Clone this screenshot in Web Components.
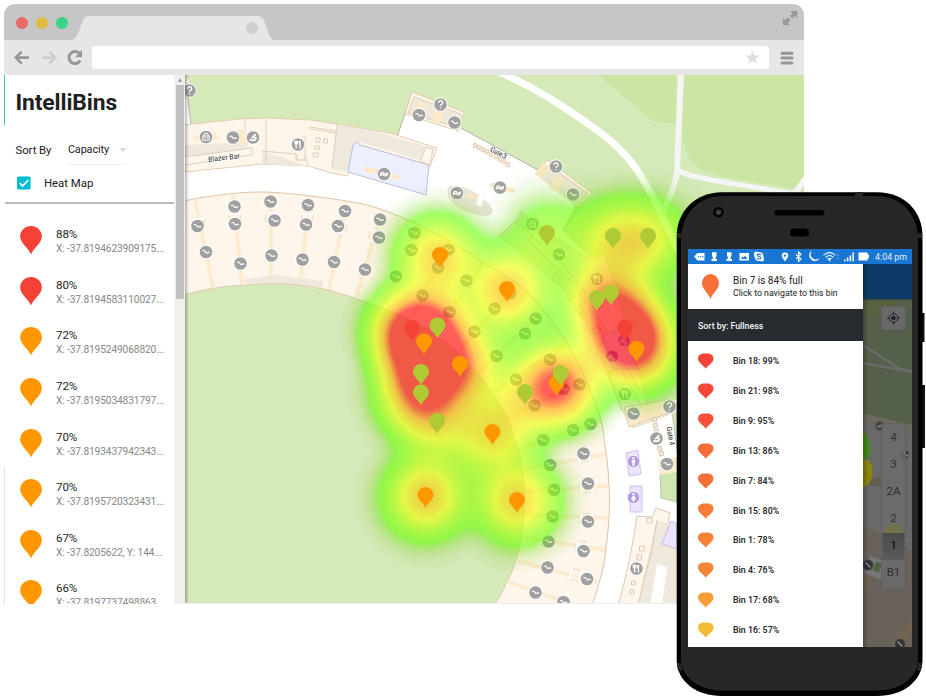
<!DOCTYPE html>
<html lang="en">
<head>
<meta charset="utf-8">
<title>IntelliBins</title>
<style>
html,body{margin:0;background:#fff;font-family:Roboto,"Liberation Sans",sans-serif;color:#212121}
body{width:926px;height:696px;overflow:hidden}
</style>
</head>
<body>
<showcase-stage>
  <browser-window>
    <bin-sidebar slot="side"></bin-sidebar>
    <stadium-map slot="main"></stadium-map>
  </browser-window>
  <phone-frame slot="overlay"><phone-app></phone-app></phone-frame>
</showcase-stage>
<script>
const define = (name, html, after) => customElements.define(name, class extends HTMLElement {
  connectedCallback() {
    if (this.shadowRoot) return;
    const root = this.attachShadow({mode: 'open'});
    root.innerHTML = typeof html === 'function' ? html(this) : html;
    if (after) after(root, this);
  }
});
const PIN = 'M0 0C-1.6-4.4-8-8.4-8-13.2A8 7.8 0 1 1 8-13.2C8-8.4 1.6-4.4 0 0Z';

/* Smooth curve through a flat list of coordinates */
const curve = (p, start = 'M') => {
  const n = p.length / 2, at = i => { i = Math.max(0, Math.min(n - 1, i)); return [p[2*i], p[2*i+1]]; };
  let d = start + p[0] + ' ' + p[1];
  for (let i = 0; i < n - 1; i++) {
    const a = at(i-1), b = at(i), c = at(i+1), e = at(i+2);
    d += `C${b[0]+(c[0]-a[0])/6} ${b[1]+(c[1]-a[1])/6} ${c[0]-(e[0]-b[0])/6} ${c[1]-(e[1]-b[1])/6} ${c[0]} ${c[1]}`;
  }
  return d;
};

define('showcase-stage', `<style>
:host{display:block;position:relative;width:926px;height:696px;overflow:hidden;box-sizing:border-box;padding:4px}
.over{position:absolute;left:676px;top:192px}
</style><slot></slot><div class="over"><slot name="overlay"></slot></div>`);

define('browser-window', `<style>
:host{display:grid;grid-template-rows:36px 35px 529px;width:800px;height:600px;border-radius:11px 11px 0 0;overflow:hidden;background:#fff}
.title{background:#c6c6c6;display:flex}
.bar{background:#e6e6e6;display:flex;align-items:center;padding:0 10.5px 0 9px}
.url{flex:1;height:23px;background:#fff;border-radius:3px;margin:0 11px 0 9px;display:flex;align-items:center;justify-content:flex-end;padding-right:9px}
.body{display:grid;grid-template-columns:181px 619px;min-height:0}
svg{display:block}
</style>
<div class="title"><svg width="800" height="36" viewBox="4 4 800 36">
<path d="M70 40C76 40 77 36 82 23C84 17 85 16 90 16H256C262 16 263 18 265 23L269 34C271 39 272 40 276 40Z" fill="#e6e6e6"/>
<circle cx="22" cy="23" r="6.1" fill="#e96b68"/><circle cx="42" cy="23" r="6.1" fill="#e0bb44"/><circle cx="62" cy="23" r="6.1" fill="#3ad38a"/>
<circle cx="252" cy="28" r="6.1" fill="#cfcfcf"/>
<path d="M790.3 11H797.3V18L795 15.8L792.4 18.5L789.8 15.8L792.5 13.2ZM783 18V25H790L787.6 22.7L790.4 20L787.6 17.5L785.2 20.3Z" fill="#989898"/>
</svg></div>
<div class="bar">
<svg width="70" height="24" viewBox="13 46 70 24" fill="none" stroke="#979797" stroke-width="2.6" stroke-linecap="round">
<path d="M28 57.6H16M21 52.3L15.7 57.6L21 62.9"/><path d="M43 57.6H55M50 52.3L55.3 57.6L50 62.9" stroke="#cdcdcd"/>
<path d="M80 54.2A6 6 0 1 0 80.2 60.6" stroke-width="3" stroke-linecap="butt"/><path d="M82 50V57.3H75Z" fill="#979797" stroke="none"/></svg>
<div class="url"><svg width="15" height="15" viewBox="0 0 24 24"><path d="M12 .8L14.9 8.9H23.6L16.7 14L19.2 22.4L12 17.3L4.8 22.4L7.3 14L.4 8.9H9.1Z" fill="#dedede"/></svg></div>
<svg width="14" height="14" viewBox="0 0 14 14" stroke="#969696" stroke-width="3" stroke-linecap="round"><path d="M2 2.2H12M2 7.1H12M2 12.1H12"/></svg>
</div>
<div class="body"><slot name="side"></slot><slot name="main"></slot></div>`);

define('bin-row', el => `<style>
:host{display:flex;height:50.65px;align-items:flex-start}
svg{flex:none;margin:0 14.5px 0 0;overflow:visible}
b,span{display:block;font-weight:400;white-space:nowrap}
b{font-size:11.6px;line-height:15px;color:#252525;margin-top:1px;letter-spacing:-.1px}
span{font-size:10.2px;line-height:14px;color:#888;letter-spacing:-.13px}
</style><svg width="22" height="28.500" viewBox="-8 -21 16 21"><path d="${PIN}" fill="${el.getAttribute('color')}"/></svg>
<div><b>${el.getAttribute('fill')}%</b><span>${el.getAttribute('pos')}</span></div>`);

const rows = [[88,'X: -37.8194623909175...'],[80,'X: -37.8194583110027...'],[72,'X: -37.8195249068820...'],[72,'X: -37.8195034831797...'],[70,'X: -37.8193437942343...'],[70,'X: -37.8195720323431...'],[67,'X: -37.8205622, Y: 144...'],[66,'X: -37.8197737498863...']];
define('bin-sidebar', `<style>
:host{display:grid;grid-template-columns:170.4px 10.6px;height:529px;overflow:hidden;box-sizing:border-box;
background:linear-gradient(#3ecf8e,#3ecf8e) 0 0/1px 50px no-repeat,linear-gradient(#e3e3e3,#e3e3e3) 0 391px/1px 138px no-repeat #fff}
.panel{overflow:hidden;padding-left:1px}
h1{font-size:22.8px;line-height:28px;font-weight:700;margin:14px 0 0 10.5px;letter-spacing:-.1px;color:#212121}
.sort{display:flex;margin:18px 0 0 10.5px;font-size:11.4px;letter-spacing:-.08px;line-height:30px;height:30px}
.sel{margin-left:16.500px;width:58px;height:30px;border-bottom:1px solid #eee;display:flex;align-items:center;justify-content:space-between;box-sizing:border-box;font-size:10.800px}
.sel i{border:4px solid transparent;border-top-color:#dcdcdc;border-bottom:0;margin-right:-1px}
.heat{display:flex;align-items:center;margin:11px 0 0 12.400px;height:14px;font-size:11.400px}
.heat svg{margin-right:12.500px}
hr{margin:12px 0 0;border:0;border-top:2px solid #bcbcbc}
.list{padding:22px 0 0 14.500px}
.scroll{background:#f0f0f0;display:flex;flex-direction:column;align-items:center}
.scroll i{border:2.500px solid transparent;border-bottom:4px solid #999;border-top:0;margin:3px 0 3px}
.scroll div{width:8px;height:214px;background:#c1c1c1}
</style><div class="panel"><h1>IntelliBins</h1>
<div class="sort">Sort By<div class="sel">Capacity<i></i></div></div>
<div class="heat"><svg width="14" height="14"><rect width="13.500" height="13" y=".5" rx="1.500" fill="#00bcd4"/><path d="M2.600 7L5.600 10L11.300 4" fill="none" stroke="#fff" stroke-width="1.700"/></svg>Heat Map</div><hr>
<div class="list">${rows.map(r => `<bin-row fill="${r[0]}" pos="${r[1]}" color="${r[0] > 75 ? '#f44336' : '#ff9800'}"></bin-row>`).join('')}</div></div>
<div class="scroll"><i></i><div></div></div>`);

/* ---- Stadium map ---- */
const outer = [178,203,205,197,265,192,340,200,383,210,435,233,483,262,527,292,563,337,583,373,600,417,605,445,608,470,609.5,505,607,540,602,572,592,606];
const inner = [492,609,503,590,515,563,522,533,524,500,523,475,518,450,503,410,477,373,445,342,407,318,360,300,323,289,285,284,247,285,215,288,178,296];
const aisles = [[195,200,213,288],[233,195,242,284],[271,193,271,276],[309,196,301,278],[347,201,329,290],[382,211,356,297],[418,225,385,302],[450,240,413,316],[483,262,432,340],[510,292,460,350],[535,318,478,373],[565,345,493,393],[580,383,507,418],[600,420,518,450],[605,454,522,470],[608,486,524,492],[608,518,524,515],[606,550,522,537],[597,582,517,561],[580,607,508,582]];
const stairs = [419,115,454.5,122.5,573,194.5,233,137.5,234.5,206.5,270.5,201.5,308,205,345,211,380,219.5,197.5,226,235,224,274.5,220.5,306,224.5,338,226,379,237.5,206,252,240.5,263.5,271.5,255.5,302.5,259.5,334,262,365,269.5,414.5,233,411.5,250,396,276.5,422.5,295.5,559,254.5,448.5,249.5,438,267.5,466.5,280.5,494.5,308.5,535.5,318.5,525,333.5,474.5,331.5,449.5,312,496.5,356,550,359.5,516,379.5,579.5,384.5,563.5,389,534.5,405.5,633.5,413.5,573,430,590.5,424,510,293,543,440,550,465,583.5,453.5,588,483.5,554,489.7,588,521.5,552.5,516.5,548.5,541.5,583.5,551,547.5,567.5,587,579,535.5,592.5,563.5,602,667,464];
const glyph = {
  q: '<path d="M-2-1.6C-2-4.6 2.2-4.4 2.2-1.8C2.2-.2 0-.2 0 1.6M0 2.8V4"/>',
  f: '<path d="M-1.9-3.8V4M2-3.8V4M-3.1-3.8V-.8H-.7V-3.8M1.4-3.4V0"/>',
  b: '<path d="M-3.2-1H3.2V3.2H-3.2ZM-2.4-1L-1.6-3.6H1.6L2.4-1M-1.2 .2V1.8M1.2 .2V1.8" stroke-width="1"/>',
  w: '<path d="M-4 .2C-3-2-1-2 0-.6S3-.2 4-1.4M-4 2C-3 0-1 .2 0 1.4S3 1.4 4 .2"/>',
  h: '<path d="M2.6-3.4L.4-.8L-1.4 .4M3.4 .2L1.6 2.6H-3.4M1-.6L3.2 .2" stroke-width="1.8"/>',
  d: '<path d="M-2-2.5V1.5H1.5L2.6 3.6M-2-.6H1M-3 .5A3 3 0 1 0 1.5 3"/>'
};
const poi = [['q',189.5,90.5],['q',440.5,104.5],['q',556,166.5],['q',669.5,406.5],['b',206,137],['b',532.5,224],['f',298,144.5],['f',597,279],['f',625,394],['f',636.5,568.5],['w',384,174],['w',457,193],['w',500,187.5],['h',253,137.5],['h',656.5,438.5]];
const heat = [[426,497,.62],[517,501,.58],[492,434,.5],[437,424,.3],[421,396,.6],[421,376,.5],[460,368,.72],[424,346,.65],[412,331,1],[437,328,.4],[438,258,.58],[507,291,.62],[525,400,.25],[558,385,1.02],[547,237,.2],[613,240,.38],[648,240,.38],[597,300,.32],[611,295,.34],[625,328,1],[636,350,.8]];
const pins = [['g',547,246],['g',613,249],['g',648,249],['g',597,311],['g',611,305.5],['g',421,385],['g',421,405.5],['g',437,434],['g',525,405],['r',412,341],['g',437.5,338.5],['r',625,340.5],['o',440,268],['o',507,302],['o',424,354.5],['o',460,377],['o',492.500,445],['o',425.5,508],['o',517,513],['o',636.500,362],['o',556.5,396],['g',560.5,386]];
const col = {g:'#afca33', o:'#ff9800', r:'#f44336'};
const tbl = (a) => a.map(v => (v / 255).toFixed(3)).join(' ');

define('stadium-map', () => `<style>:host{display:block;width:619px;height:529px;overflow:hidden}svg{display:block}</style>
<svg width="619" height="529" viewBox="185 75 619 529">
<defs>
<radialGradient id="k">${[0,.1,.2,.3,.4,.5,.6,.7,.8,.9,1].map(t => `<stop offset="${t}" stop-color="#fff" stop-opacity="${Math.max(0, (Math.exp(-t*t*4.6) - .01) / .99).toFixed(4)}"/>`).join('')}</radialGradient>
<linearGradient id="edge"><stop stop-color="#000" stop-opacity=".28"/><stop offset="1" stop-color="#000" stop-opacity="0"/></linearGradient>
<filter id="ramp" x="0" y="0" width="1" height="1" color-interpolation-filters="sRGB">
<feComponentTransfer in="SourceGraphic" result="c">
<feFuncR type="table" tableValues="${tbl([105,102,147,193,238,244,249,255,255,255,255])}"/>
<feFuncG type="table" tableValues="${tbl([190,255,255,255,255,227,198,170,113,57,0])}"/>
<feFuncB type="table" tableValues="0 0"/></feComponentTransfer>
<feColorMatrix in="SourceGraphic" values="0 0 0 0 1 0 0 0 0 1 0 0 0 0 1 1 0 0 0 0" result="m"/>
<feComponentTransfer in="m" result="m2"><feFuncA type="table" tableValues="0 .61 .62 .62 .62 .62 .62 .62 .62 .62 .62"/></feComponentTransfer>
<feComposite in="c" in2="m2" operator="in"/></filter>
<g id="st"><circle r="7.2" fill="#fff"/><circle r="6.3" fill="#a0a0a0"/><path d="M-3.700-.9C-2.400-2-1.600-1.500-.8-.3S1 1.400 1.800 .6S3 .4 3.700 1.200" stroke="#fff" stroke-width="1.200" fill="none"/></g>
</defs>
<rect x="185" y="75" width="619" height="529" fill="#d5e9b9"/>
<g fill="#cbe6a2" stroke="#d9ecbf" stroke-width="1"><path d="M596 74L653 122L677 124.500V74Z"/><path d="M682 74H805V191L724 178L705 173L690 163L684 147L681 130Z"/></g>
<!-- park paths -->
<g fill="none" stroke-linejoin="round"><path d="${curve([495,70,530,87,565,108,607,138,632,163,650,192,665,222,683,260])}" stroke="#fff" stroke-width="7"/>
<path d="M681 74L677 172C675 188 668 200 662 215" stroke="#f5f5f5" stroke-width="6"/><path d="M677 170C690 178 720 181 806 196" stroke="#f5f5f5" stroke-width="5"/><path d="M790 200L806 178" stroke="#f5f5f5" stroke-width="6"/></g>
<!-- concourse -->
<path d="M180 150L191 125L186 80L180 75V300H500L560 606H677V400L645 403L605 255L593 259L563 230L580 195L538 170L461 128L412 92L397 137L340 140L185 150Z" fill="#fff"/>
<path d="${curve(inner)}L180 610Z" fill="#d5e9b9"/>
<path d="M605 255L593 259L563 230L580 205L610 225Z" fill="#d5e9b9"/>
<path d="M660 474L677 466V502L661 498Z" fill="#cfe6b2" stroke="#a5b98b" stroke-width=".7"/><path d="M672 413L677 402V450Z" fill="#cfe6b2" stroke="#b5b1a8" stroke-width=".7"/>
<path d="M563 230L580 205M461 128L538 170M191 125L187 90M397 137L412 93" stroke="#b5b1a8" stroke-width="1" fill="none"/>
<!-- north stand -->
<g stroke="#e4cdb6" stroke-width="1" fill="#fef6ea">
<path d="M184 125L240 119L266 118L310 120L337 124L390 133L437 148L430 166L384 152L360 145L347 176L332 173L308 166L262 164L185 172Z"/>
<path d="M184 145L248 142L247 155L185 163Z M262 151L298 154L307 156V166L262 164Z M337 125L370 130L425 146L427 162L360 142L351 172L332 169Z" fill="#efe8dc" stroke="none"/>
<path d="M266 118V164M245 120V142M184 157L252 148V155L185 165M337 125L332 168M310 127L336 131V133L310 129ZM302 137H305V160H297V155M262 151L296 154V160H307V166"/>
<path d="M316 138h4v4h-4zM323.500 139h4v4h-4zM314.500 146h5v3h-5zM313 153h5v4h-5z"/>
<path d="M193 136L216 132L218 139L196 142ZM228 130L246 129L246 143L228 143Z" fill="#fdebd0" stroke="none"/>
<path d="M353 145L357 142L360 145L429 165L426 195L348 172Z" fill="#ebeffe" stroke="#bcbfe0"/><path d="M426 147L433 149L430 165L420 161Z"/>
<path d="M365 166L400 176L399 180L364 171Z" fill="#fde8c8" stroke="none"/>
<path d="M185 76L190 80L191 95L185 98Z"/>
<path d="M412 92L464 112L458 131L405 114Z"/><path d="M414 97L461 114L457 127L408 113Z" fill="#efe8dc"/><path d="M437 107L444 109L439 124L431 121ZM418 102L427 105L421 113L413 110Z" fill="#fde8c8" stroke="none"/>
<path d="M547 160L592 193L578 207L536 174Z"/><path d="M549 165L588 194L578 204L541 175Z" fill="#efe8dc"/><path d="M543 163L550 166L543 180L535 174ZM557 175L565 179L557 192L550 188Z" fill="#fde8c8" stroke="none"/>
<path d="M448 187C457 182 480 191 492 208C496 222 469 215 455 205C449 200 446 192 448 187Z" fill="#ebe4dc" stroke="none"/><path d="M491 182L515 189L514 193L489 187Z M466 193L478 196V199L465 197Z" fill="#fde8c8" stroke="none"/><path d="M479 195L484 197L481 207L476 205Z" fill="#fff" stroke="none"/>
<path d="M474 143l3 1-1 4-3-1zM478 145l3 1-1 4-3-1zM482 147l3 1-1 4-3-1zM486 149l3 1-1 4-3-1zM490 152l3 1-1 4-3-1zM495 154l3 1-1 4-3-1zM499 157l3 1-1 4-3-1zM503 159l3 1-1 4-3-1zM507 162l3 1-1 4-3-1z" fill="#f5e7d6"/>
</g>
<!-- seating ring -->
<path d="${curve(outer)}${curve(inner, 'L')}Z" fill="#fef6ea"/>
<g stroke="#fdebd0" stroke-width="4">${aisles.map(a => `<path d="M${a[0]} ${a[1]}L${a[2]} ${a[3]}"/>`).join('')}</g>
<g fill="#fef3e0" stroke="#e6d8c6" stroke-width=".8">${[[199,223,-8],[235,218,-4],[271,217,0],[307,218,3],[341,226,12],[375,235,15],[411,248,22],[467,282,40],[524,331,52],[551,358,60],[585,456,80],[588,487,88],[588,519,92],[584,547,96],[577,575,105]].map(a => `<g transform="translate(${a[0]} ${a[1]}) rotate(${a[2]})"><path d="M-5.500-5.500H5.500V8H-5.500Z"/><path d="M-5-3V-4.500H5V-3M-5 5.500V7H5V5.500" fill="none" stroke="#fff" stroke-width="2"/></g>`).join('')}</g>
<path d="M244 279L275 275L323 281V289Q285 282 247 285Z" fill="#efe8dc"/>
<path d="${curve(outer)}" fill="none" stroke="#dfc3a8" stroke-width="1"/><path d="${curve(inner)}" fill="none" stroke="#e0c9b0" stroke-width="1"/>
<!-- east stand -->
<g stroke="#dbc9b0" stroke-width="1" fill="#fef6ea">
<path d="M593 259L605 255L647 403L673 399L676 412L633 428L622 410L604 366Q590 320 562 288L499 236L515 222Z" fill="#f7efe2" stroke="#e8dccb"/>
<path d="M514 221L520 210L585 258L593 259" fill="#efe8dc" stroke="none"/><path d="M499 236L515 222L532 234L529 241L550 262L560 271L575 285L595 318L612 350L640 405M532 236L562 264L580 285L600 320L615 350L648 403M608 372L630 365M608 372L622 410M563 230L593 259M552 279l5-6 4 4-5 6zM566 297l5-5 4 4-5 5zM575 309l5-4 4 5-5 4zM592 330l5-4 4 5-5 4z" fill="none"/>
<path d="M602 335L622 328L638 370L612 368Z" fill="#e7ddf9" stroke="#c9b9ee"/>
<path d="M624 407L671 399L674 411L629 427Z" fill="#fde8c8"/>
<path d="M652 418l4-1 1 4-4 1zM653 424l4-1 1 4-4 1zM654 430l4-1 1 4-4 1zM657 447l4-1 1 4-4 1zM659 452l4-1 1 4-4 1z" fill="#f5e7d6"/><path d="M658 460L677 457V472L660 475Z" fill="#fde8c8" stroke="none"/>
<path d="M626 453L638 450L641 474L629 476ZM630 486H642V512H630Z" fill="#ede3fc" stroke="#cfc3ee"/>
<path d="M637 516L652 517L656 508L670 513L668 522L677 526V606H618Q631 560 637 516Z"/><path d="M657 521L669 523L677 532V606H639Q644 570 657 521Z" fill="#efe8dc" stroke="none"/><path d="M657 520L652 550L644 580L638 606" fill="none"/><path d="M657 564L667 567L662 606H650Z" fill="#fff" stroke="none"/><path d="M671 521L677 524V549L662 544Z" fill="#ede3fc" stroke="#c9bcef"/>
<path d="M647 518h5v5h-5zM639.500 546h5v5h-5zM637 555h4.500v5h-4.500zM631.500 581h4v4h-4zM630 590h4v4h-4z"/></g>
<!-- facility icons -->
${Array.from({length: stairs.length/2}, (_, i) => `<use href="#st" x="${stairs[2*i]}" y="${stairs[2*i+1]}"/>`).join('')}
${poi.map(p => `<g transform="translate(${p[1]} ${p[2]})"><circle r="7.2" fill="#fff"/><circle r="6.3" fill="#a0a0a0"/><g stroke="#fff" stroke-width="1.3" fill="none">${glyph[p[0]]}</g></g>`).join('')}
${[[624,340.5],[612,356.5]].map(p => `<g transform="translate(${p})"><circle r="6" fill="#9c6fd0"/><g stroke="#fff" fill="none">${glyph.d}</g></g>`).join('')}
${[[633.5,461.5],[633.5,497.5]].map((p,i) => `<g transform="translate(${p})"><circle r="6.200" fill="#b29be3" stroke="#fff" stroke-width=".8"/><circle cy="-3.200" r="1.200" fill="#fff"/><path d="${i ? 'M-1-1.500H1L2.500 2H.8V4.500H-.8V2H-2.500Z' : 'M-1.700-1.500H1.700V1.500H1V4.500H-1V1.500H-1.700Z'}" fill="#fff"/></g>`).join('')}
<g font-family="Roboto,sans-serif" font-size="7.200" fill="#222" stroke="#fff" stroke-width="1.500" paint-order="stroke" letter-spacing=".1"><text transform="translate(208.500 162) rotate(-7)" textLength="32">Blazer Bar</text><text transform="translate(489.500 151) rotate(27)" textLength="18">Gate 3</text><text transform="translate(666.500 427) rotate(80)" textLength="19">Gate 4</text></g>
<g filter="url(#ramp)"><rect x="185" y="75" width="619" height="529" fill="#000"/>${heat.map(h => `<circle cx="${h[0]}" cy="${h[1]}" r="73" fill="url(#k)" opacity="${Math.min(1, h[2])}" style="mix-blend-mode:plus-lighter"/>`).join('')}</g>
${pins.map(p => `<path transform="translate(${p[1]} ${p[2]})" d="${PIN}" fill="${col[p[0]]}"/>`).join('')}
<rect x="185" y="75" width="4" height="529" fill="url(#edge)"/><path d="M185 603.500H804" stroke="#eee"/>
</svg>`);

/* ---- Phone ---- */
define('phone-frame', `<style>
:host{display:block;position:relative;width:250px;height:504px}
svg{position:absolute;inset:0}
.screen{position:absolute;left:12px;top:57px;width:224px;height:398px;overflow:hidden}
</style><svg width="250" height="504" viewBox="676 192 250 504">
<path d="M920 313H924.500V342H920ZM920 385H925V448H920Z" fill="#111"/>
<path d="M722 192.300H877C905 192.300 922.500 212 922.500 236V660C922.500 681 903 696 877 696H722C696 696 676.700 681 676.700 660V236C676.700 212 695 192.300 722 192.300Z" fill="#000"/>
<path d="M722 196H877C901 196 918 214 918 240V660C918 676 902 690.500 877 690.500H722C698 690.500 681 676 681 660V240C681 214 699 196 722 196Z" fill="#272727"/>
<path d="M855 192H863V196H855ZM677 233H681V238H677ZM918 233H922V238H918ZM677 663H681.500L682 671H678ZM918 663H922L921 671H917Z" fill="#272727"/>
<rect x="774.500" y="210" width="50" height="5.500" rx="2.700" fill="#000"/><rect x="790" y="228.500" width="19" height="8" rx="4" fill="#000"/>
<circle cx="718.500" cy="212.300" r="5.200" fill="#000"/><circle cx="718.500" cy="212.300" r="3" fill="#333"/><circle cx="718.500" cy="212.300" r="1.200" fill="#555"/></svg>
<div class="screen"><slot></slot></div>`);

define('status-bar', `<style>:host{display:flex;height:15px;background:#1976d2;color:#e8f1fb;align-items:center}svg{display:block}
span{font-size:8.900px;margin-left:2px;white-space:nowrap}</style>
<svg width="185" height="15" viewBox="688 249 185 15" fill="#fff">
<path d="M694 256.500L697.500 253H704.500V260.500H697.500Z"/><g fill="#1976d2"><circle cx="698.500" cy="256.800" r=".7"/><circle cx="700.700" cy="256.800" r=".7"/><circle cx="702.900" cy="256.800" r=".7"/></g>
<path d="M712 252.300H716.500V256L715.700 257V259H717V261H711.500V259H712.800V257L712 256ZM727 252.300H731.500V256L730.700 257V259H732V261H726.500V259H727.800V257L727 256Z"/>
<path d="M739.500 253H749V260.500H739.500ZM741 259H747.500L745 255.800L743.500 257.500L742.500 256.500Z" fill-rule="evenodd"/>
<circle cx="759" cy="256.500" r="4.500"/><circle cx="756.300" cy="254" r="2.400"/><circle cx="761.700" cy="259" r="2.400"/><path d="M760.900 255C760.300 253.700 757.300 253.800 757.300 255.300C757.300 256.900 760.900 256.100 760.900 257.900C760.900 259.400 757.500 259.400 757 257.900" fill="none" stroke="#1976d2" stroke-width="1.100"/>
<path transform="translate(785 261.500) scale(.41)" d="M0 0C-1.600-4.400-8-8.400-8-14A8 8 0 1 1 8-14C8-8.400 1.600-4.400 0 0Z"/><circle cx="785" cy="255.600" r="1.200" fill="#1976d2"/>
<path d="M796 254.500L801 259L798.500 261.500V252L801 254.300L796 259" fill="none" stroke="#fff" stroke-width="1.100"/>
<path d="M811 251.500A5.300 5.300 0 1 0 818.800 259A5.600 5.600 0 0 1 811 251.500Z" stroke="#fff" stroke-width=".6"/>
<g fill="none" stroke="#fff" stroke-width="1.100"><path d="M823.500 255.300Q829.500 250 835.500 255.300M825.500 257.300Q829.500 253.800 833.500 257.300M827.500 259.200Q829.500 257.500 831.500 259.200"/></g><circle cx="829.500" cy="260.300" r="1"/><path d="M837.500 254.500h1v1.200h-1zM837.500 258h1v1.200h-1z" opacity=".6"/>
<path d="M844 259.500h1.600v1.800h-1.600zM846.800 257.500h1.600v3.800h-1.600zM849.600 255.500h1.600v5.800h-1.600zM852.400 252.500h1.600v8.800h-1.600z"/>
<path d="M858.500 252.500H867.500V254.500H869V258.500H867.500V260.500H858.500Z"/></svg><span>4:04 pm</span>`);

define('phone-row', el => `<style>:host{display:flex;align-items:center;height:29.850px;padding-left:10px;font-size:8.800px;font-weight:600;color:#2b2b2b;white-space:nowrap}
svg{margin-right:19.500px;display:block}</style>
<svg width="15.500" height="16" viewBox="0 0 16 16"><path d="M8 16C6 12.500 0 10 0 5.700C0 1 4-.1 8 .3C12-.1 16 1 16 5.700C16 10 10 12.500 8 16Z" fill="${el.getAttribute('color')}"/></svg><slot></slot>`);

const list = [['18: 99','#f44336'],['21: 98','#f44737'],['9: 95','#f55138'],['13: 86','#f66c38'],['7: 84','#f67037'],['15: 80','#f57c37'],['1: 78','#f58236'],['4: 76','#f58635'],['17: 68','#f59e35'],['16: 57','#f4bc36']];
define('phone-app', `<style>
:host{display:grid;grid-template-rows:15px 383px;width:224px;height:398px}
.main{display:grid;grid-template-columns:174.500px 49.500px;overflow:hidden}
.drawer{background:#fff;overflow:hidden}
.next{height:45px;display:flex;align-items:center;font-size:10px;line-height:12.500px;white-space:nowrap}
.next div{padding-top:1px}
.next svg{margin:0 14px 0 14px}.next small{display:block;font-size:8.750px}
.sort{height:32px;background:#272c30;color:#f5f5f5;font-size:8.800px;font-weight:500;display:flex;align-items:center;padding:1px 0 0 10px;box-sizing:border-box}
.list{padding-top:5.500px}
.side{background:#68625a}
.side svg{display:block}
</style><status-bar></status-bar><div class="main"><div class="drawer">
<div class="next"><svg width="17" height="25" viewBox="-8 -21 16 21" preserveAspectRatio="none"><path d="${PIN}" fill="#f67037"/></svg><div>Bin 7 is 84% full<small>Click to navigate to this bin</small></div></div>
<div class="sort">Sort by: Fullness</div>
<div class="list">${list.map(r => `<phone-row color="${r[1]}">Bin ${r[0]}%</phone-row>`).join('')}</div></div>
<div class="side"><svg width="49.500" height="383" viewBox="862.500 264 49.500 383">
<defs><linearGradient id="s"><stop stop-color="#000" stop-opacity=".28"/><stop offset="1" stop-color="#000" stop-opacity="0"/></linearGradient><linearGradient id="one" x2="0" y2="1"><stop stop-color="#4b4b4b"/><stop offset="1" stop-color="#5a5a5a"/></linearGradient></defs>
<path d="M862 420L912 430V550L862 525Z" fill="#696969"/>
<path d="M862 264H912V425L862 414Z" fill="#55604a"/><path d="M862 299H900L885 316H862Z" fill="#55633f"/>
<path d="M862 345L900 369L912 371M862 363L912 372" stroke="#6a6a6a" stroke-width="2.500" fill="none"/>
<path d="M862 414L912 426V436L862 423Z" fill="#6c6862"/><path d="M862 420L912 435" stroke="#716354" stroke-width="2" stroke-dasharray="3 2"/>
<path d="M862 523L912 542M862 414L912 426" stroke="#7b7166" stroke-width=".8"/>
<path d="M866 482Q876 474 882 480L880 487L866 485Z" fill="#625f52"/>
<path d="M870 556L885 562L880 580L864 573Z" fill="#777"/><path d="M876 561L882 564L878 573L872 570Z" fill="#526344"/><path d="M890 643L912 620V634L900 647Z" fill="#756450"/><path d="M862 573L873 579L862 600Z" fill="#706353"/>
<circle cx="860" cy="436" r="6" fill="#a4341d"/><path d="M862 430Q870 438 870 450Q869 458 862 461Z" fill="#458b16"/><path d="M862 459Q872 459 872 472Q872 484 862 488Z" fill="#8b850d"/>
<g fill="#343434" stroke="#666"><circle cx="867.500" cy="565" r="5.500"/><circle cx="899.500" cy="644" r="5.500"/><circle cx="879.500" cy="426" r="5" fill="#444"/><circle cx="904" cy="454.500" r="5" fill="#444"/></g><path d="M865 562.500L870 567.500M897 641.500L902 646.500M877 427L882 425M904 450V454L908 456" stroke="#8a8a8a" stroke-width="1.500"/>
<rect x="881" y="424" width="24" height="166" rx="1" fill="#6c6c6c" fill-opacity=".8" stroke="#5a5a5a" stroke-width=".7"/>
<path d="M882 533Q893 515 904 533Z" fill="#75724a"/><rect x="882" y="533" width="22" height="27" fill="url(#one)"/>
<rect x="881" y="306.500" width="24" height="23.500" rx="1" fill="#696969" stroke="#5c5c5c" stroke-width=".7"/>
<g stroke="#222" fill="none" stroke-width="1"><circle cx="893" cy="318" r="4.300"/><path d="M893 311.500V314M893 322V324.500M886.500 318H889M897 318H899.500"/><circle cx="893" cy="318" r="1.900" fill="#222"/></g>
<g font-family="Roboto,sans-serif" font-size="11.500" fill="#303030" text-anchor="middle"><text x="893" y="441">4</text><text x="893" y="467.500">3</text><text x="893" y="494.500">2A</text><text x="893" y="521.500">2</text><text x="893" y="549" fill="#111" font-weight="500">1</text><text x="893" y="575.500">B1</text></g>
<rect x="862" y="264" width="50" height="35" fill="#0c3b68"/><rect x="862" y="299" width="50" height="1.500" fill="#414b3c"/>
<rect x="862" y="264" width="6" height="383" fill="url(#s)"/></svg></div></div>`);
</script>
</body>
</html>
